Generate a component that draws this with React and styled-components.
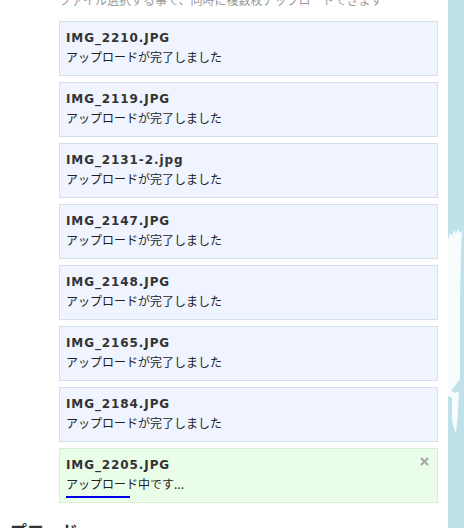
import styled, { createGlobalStyle } from "styled-components";

const files = [
  { name: "IMG_2210.JPG", done: true },
  { name: "IMG_2119.JPG", done: true },
  { name: "IMG_2131-2.jpg", done: true },
  { name: "IMG_2147.JPG", done: true },
  { name: "IMG_2148.JPG", done: true },
  { name: "IMG_2165.JPG", done: true },
  { name: "IMG_2184.JPG", done: true },
  { name: "IMG_2205.JPG", done: false, progress: 17.5 },
];

const Global = createGlobalStyle`
  html, body {
    margin: 0;
    padding: 0;
    background: #fff;
    overflow: hidden;
  }
  body {
    font-family: "Noto Sans CJK JP", "DejaVu Sans", sans-serif;
  }
`;

export default function App() {
  return (
    <>
      <Global />
      <Page>
        <Content>
          <Section>
            <Note>ファイル選択する事で、同時に複数枚アップロードできます</Note>
            <List>
              {files.map((f) => (
                <Card key={f.name} $done={f.done}>
                  <FileName>{f.name}</FileName>
                  <Status>
                    {f.done ? "アップロードが完了しました" : "アップロード中です..."}
                  </Status>
                  {!f.done && (
                    <>
                      <Progress>
                        <Bar style={{ width: `${f.progress}%` }} />
                      </Progress>
                      <Close aria-label="cancel">
                        <svg width="9" height="9" viewBox="0 0 9 9">
                          <path
                            d="M1 1 L8 8 M8 1 L1 8"
                            stroke="#a8a8a8"
                            strokeWidth="2.2"
                          />
                        </svg>
                      </Close>
                    </>
                  )}
                </Card>
              ))}
            </List>
          </Section>
          <Heading>プロード</Heading>
        </Content>
        <Side>
          <svg width="16" height="528" viewBox="0 0 16 528" preserveAspectRatio="none">
            <rect width="16" height="528" fill="#bfe2ea" />
            <path
              d="M0 240 L2 233 L4 236 L6 230 L8 234 L10 229 L12 233 L14 231 L13 250 L12 300 L12 379 L9 383 L3 391 L7 393 L11 391 L10 412 L8 433 L6 428 L4 420 L4 398 L1 396 L0 396 Z"
              fill="#f7fcfd"
            />
          </svg>
        </Side>
      </Page>
    </>
  );
}

const Page = styled.div`
  display: flex;
  width: 464px;
  height: 528px;
  overflow: hidden;
`;

const Content = styled.div`
  flex: 1;
  min-width: 0;
  display: flex;
  flex-direction: column;
  overflow: hidden;
`;

const Section = styled.section`
  padding: 0 10px 0 59px;
`;

const Note = styled.p`
  margin: -9px 0 0;
  font-size: 12px;
  line-height: 18px;
  color: #9a9a9a;
  white-space: nowrap;
`;

const List = styled.div`
  display: flex;
  flex-direction: column;
  gap: 6px;
  margin-top: 12px;
`;

const Card = styled.div`
  position: relative;
  height: 55px;
  box-sizing: border-box;
  padding: 7px 6px 0;
  background: ${(p) => (p.$done ? "#eff4ff" : "#eafde9")};
  border: 1px solid ${(p) => (p.$done ? "#d3dfee" : "#d5eed5")};
`;

const FileName = styled.div`
  font-family: "DejaVu Sans", Verdana, sans-serif;
  font-weight: bold;
  font-size: 12px;
  letter-spacing: 0.9px;
  line-height: 19px;
  color: #333;
`;

const Status = styled.div`
  font-size: 12px;
  line-height: 18px;
  color: #222;
`;

const Progress = styled.div`
  margin-top: 3px;
  width: 100%;
  height: 2px;
`;

const Bar = styled.div`
  height: 100%;
  background: #0000ee;
`;

const Close = styled.span`
  position: absolute;
  top: 8px;
  right: 8px;
  display: flex;
`;

const Heading = styled.h2`
  margin: 16px 0 0;
  padding-left: 10px;
  font-size: 17px;
  line-height: 24px;
  font-weight: bold;
  color: #333;
`;

const Side = styled.aside`
  width: 16px;
  flex-shrink: 0;
  display: flex;
`;
